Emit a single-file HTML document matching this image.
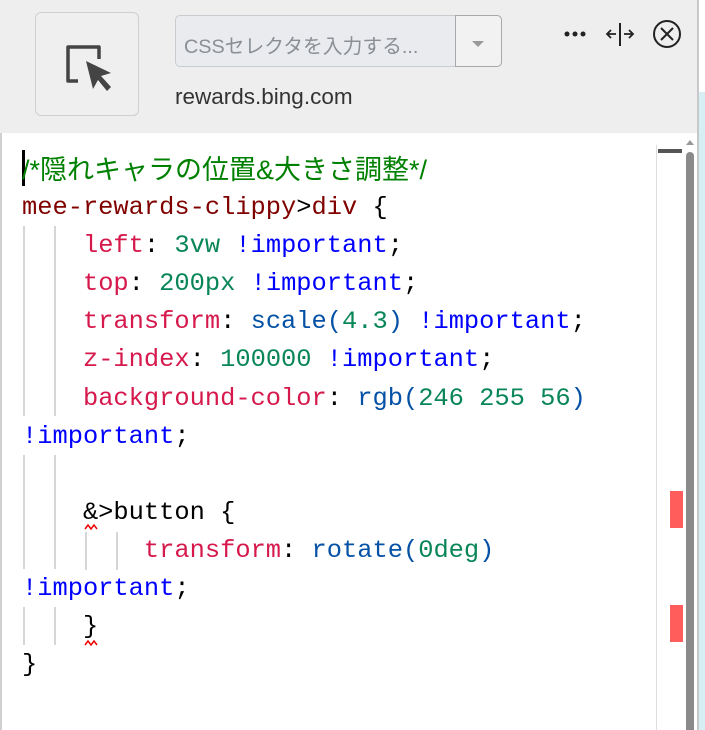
<!DOCTYPE html>
<html><head><meta charset="utf-8"><style>
body{margin:0;width:705px;height:730px;overflow:hidden;background:#fff;font-family:"Liberation Sans","Noto Sans CJK JP",sans-serif;position:relative}
.hdr{position:absolute;left:0;top:0;width:697px;height:133px;background:#eeeeee}
.blue{position:absolute;left:699px;top:92px;width:6px;height:638px;background:#d8eef5}
.rl{position:absolute;left:697px;top:0;width:2px;height:730px;background:#c8c8c8}
.ll{position:absolute;left:0;top:133px;width:2px;height:597px;background:#d0d0d0}
.box{position:absolute;left:35px;top:12px;width:102px;height:102px;border:1.5px solid #cfcfcf;border-radius:6px;background:#efefef}
.inp{position:absolute;left:175px;top:15px;width:327px;height:52px;border:1.5px solid #c8ccd0;border-radius:5px;background:#e9ebee;box-sizing:border-box}
.inp .ph{position:absolute;left:8px;top:14px;font-size:19.8px;color:#8a8f96}
.inp .dd{position:absolute;left:279px;top:-1.5px;width:47px;height:52px;border:1.5px solid #a9a9a9;border-radius:0 5px 5px 0;background:#f2f2f2;box-sizing:border-box}
.site{position:absolute;left:175px;top:84px;font-size:22.5px;color:#333}
.code{position:absolute;left:22px;top:151px;font-family:"Liberation Mono","Noto Sans CJK JP",monospace;font-size:25.4px;line-height:38.1px;white-space:pre;color:#000}
.code div{height:38.1px}
.c{color:#008000;font-family:"Liberation Sans","Noto Sans CJK JP",sans-serif;font-size:27px}
.s{color:#800000}.p{color:#d6194c}.n{color:#098658}.i{color:#0000ff}.f{color:#0451a5}
.g{position:absolute;width:2px;background:#d6d6d6}
.mm{position:absolute;left:656px;top:145px;width:1px;height:585px;background:#ddd}
.sb{position:absolute;left:686px;top:152px;width:8px;height:578px;background:#8a8a8a;border-radius:4px 4px 0 0}
.red{position:absolute;left:670px;width:13px;background:#ff5c5c}
</style></head><body>
<div class="hdr"></div><div class="blue"></div><div class="rl"></div><div class="ll"></div>
<div class="box"><svg width="102" height="102" viewBox="0 0 102 102"><path d="M42 68 H32 V34 H63 V46" fill="none" stroke="#444" stroke-width="3.5" stroke-linejoin="round"/><path d="M50 48 L75 60 L65 63 L75 74 L71 78 L62 67 L57 76 Z" fill="#444"/></svg></div>
<div class="inp"><span class="ph">CSSセレクタを入力する...</span><div class="dd"><svg width="44" height="50"><path d="M16 25 L28 25 L22 31 Z" fill="#999"/></svg></div></div>
<div class="site">rewards.bing.com</div>
<svg style="position:absolute;left:560px;top:18px" width="130" height="34"><circle cx="7" cy="16" r="2.5" fill="#222"/><circle cx="15" cy="16" r="2.5" fill="#222"/><circle cx="23" cy="16" r="2.5" fill="#222"/><path d="M60 5 V28" stroke="#222" stroke-width="2"/><path d="M48 16 H56 M51 12 L47 16 L51 20 M64 16 H72 M69 12 L73 16 L69 20" stroke="#222" stroke-width="1.8" fill="none"/><circle cx="107" cy="16" r="13" fill="none" stroke="#222" stroke-width="2"/><path d="M101 10 L113 22 M113 10 L101 22" stroke="#222" stroke-width="2"/></svg>
<div style="position:absolute;left:22px;top:150px;width:3px;height:36px;background:#000"></div>
<div class="g" style="left:23px;top:226px;height:190px"></div><div class="g" style="left:54px;top:226px;height:190px"></div>
<div class="g" style="left:23px;top:455px;height:114px"></div><div class="g" style="left:54px;top:455px;height:114px"></div>
<div class="g" style="left:85px;top:532px;height:38px"></div><div class="g" style="left:116px;top:532px;height:38px"></div>
<div class="g" style="left:23px;top:607px;height:38px"></div><div class="g" style="left:54px;top:607px;height:38px"></div>
<div class="code"><div><span class="c">/*隠れキャラの位置&amp;大きさ調整*/</span></div><div><span class="s">mee-rewards-clippy</span>&gt;<span class="s">div</span> {</div><div>    <span class="p">left</span>: <span class="n">3vw</span> <span class="i">!important</span>;</div><div>    <span class="p">top</span>: <span class="n">200px</span> <span class="i">!important</span>;</div><div>    <span class="p">transform</span>: <span class="f">scale(</span><span class="n">4.3</span><span class="f">)</span> <span class="i">!important</span>;</div><div>    <span class="p">z-index</span>: <span class="n">100000</span> <span class="i">!important</span>;</div><div>    <span class="p">background-color</span>: <span class="f">rgb(</span><span class="n">246 255 56</span><span class="f">)</span></div><div><span class="i">!important</span>;</div><div> </div><div>    &amp;&gt;button {</div><div>        <span class="p">transform</span>: <span class="f">rotate(</span><span class="n">0deg</span><span class="f">)</span></div><div><span class="i">!important</span>;</div><div>    }</div><div>}</div></div>
<svg style="position:absolute;left:84px;top:522px" width="20" height="140"><path d="M1 7 L4 3 L7 7 L10 3 L13 7" stroke="#e00" stroke-width="1.5" fill="none"/><path d="M1 123 L4 119 L7 123 L10 119 L13 123" stroke="#e00" stroke-width="1.5" fill="none"/></svg>
<div class="mm"></div>
<div style="position:absolute;left:658px;top:149px;width:24px;height:4px;background:#555"></div>
<svg style="position:absolute;left:684px;top:137px" width="12" height="10"><path d="M2 8 L6 3 L10 8 Z" fill="#999"/></svg>
<div class="sb"></div>
<div class="red" style="top:491px;height:37px"></div><div class="red" style="top:605px;height:37px"></div>
</body></html>
